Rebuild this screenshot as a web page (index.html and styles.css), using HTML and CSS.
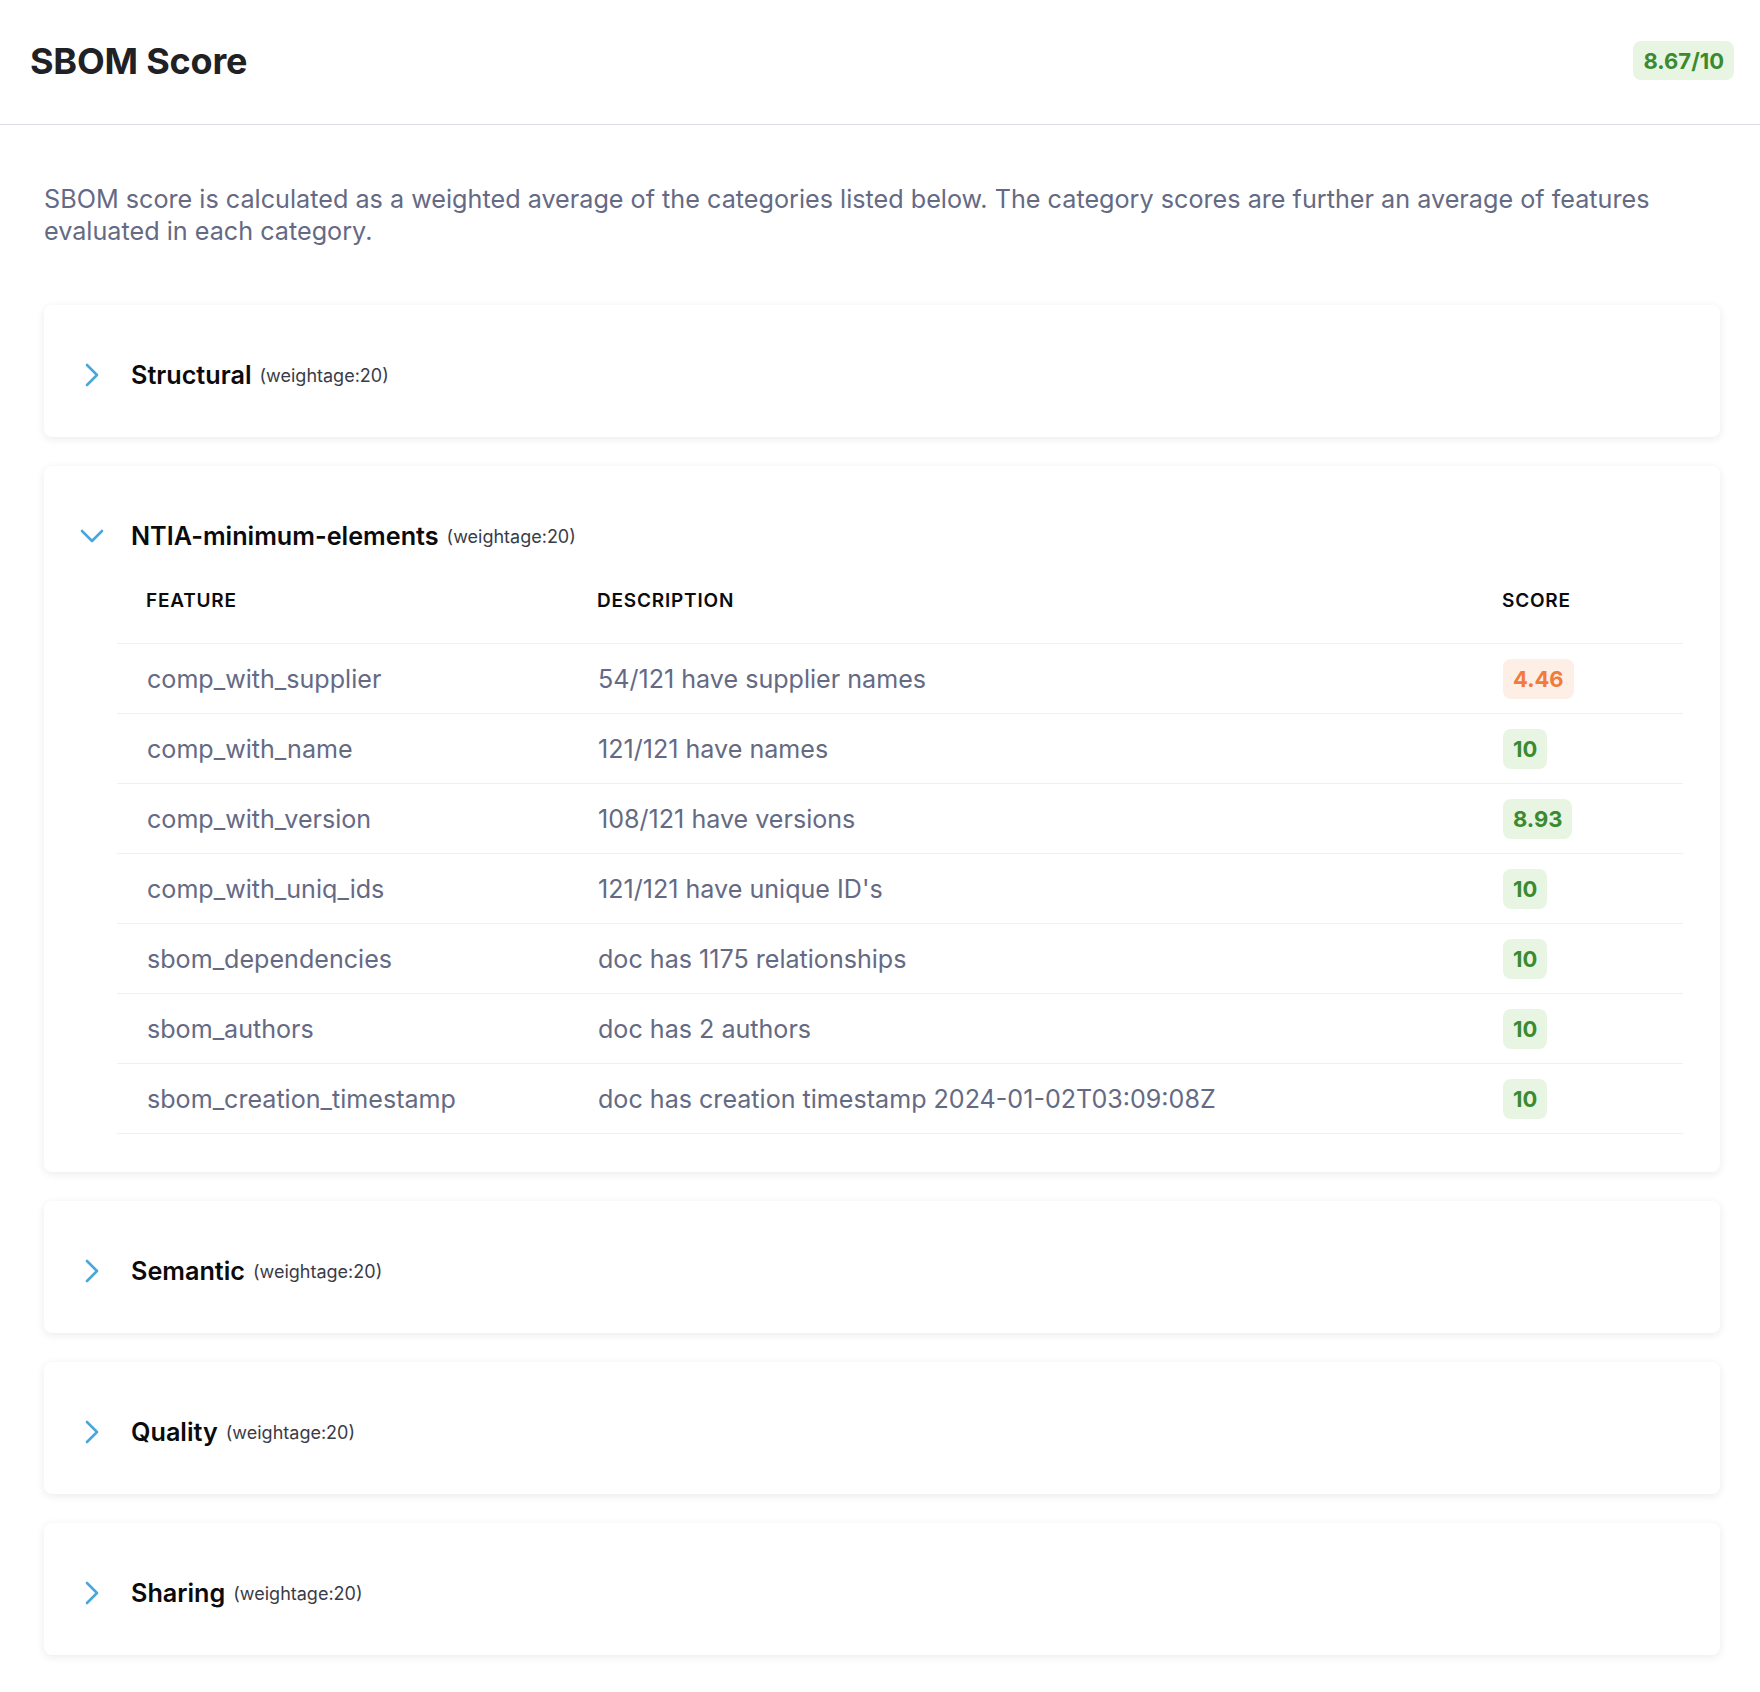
FILE: index.html
```html
<!DOCTYPE html>
<html lang="en">
<head>
<meta charset="utf-8">
<title>SBOM Score</title>
<link rel="stylesheet" href="styles.css">
</head>
<body>
<header class="page-header">
  <h1 class="page-title">SBOM Score</h1>
  <span class="score-badge score-good header-badge">8.67/10</span>
</header>
<main class="content">
  <p class="intro">SBOM score is calculated as a weighted average of the categories listed below. The category scores are further an average of features evaluated in each category.</p>

  <section class="card">
    <div class="card-head">
      <span class="chev"><svg viewBox="0 0 24 24" width="24" height="24"><path d="M7 2 L17 12 L7 22" /></svg></span>
      <span class="cat-name">Structural</span>
      <span class="cat-weight">(weightage:20)</span>
    </div>
  </section>

  <section class="card">
    <div class="card-head">
      <span class="chev"><svg viewBox="0 0 24 24" width="24" height="24"><path d="M2 7 L12 17 L22 7" /></svg></span>
      <span class="cat-name">NTIA-minimum-elements</span>
      <span class="cat-weight">(weightage:20)</span>
    </div>
    <div class="feat-table">
      <div class="feat-row feat-headrow">
        <div class="cell th">FEATURE</div>
        <div class="cell th">DESCRIPTION</div>
        <div class="cell th">SCORE</div>
      </div>
      <div class="feat-row">
        <div class="cell">comp_with_supplier</div>
        <div class="cell">54/121 have supplier names</div>
        <div class="cell"><span class="score-badge score-warn">4.46</span></div>
      </div>
      <div class="feat-row">
        <div class="cell">comp_with_name</div>
        <div class="cell">121/121 have names</div>
        <div class="cell"><span class="score-badge score-good">10</span></div>
      </div>
      <div class="feat-row">
        <div class="cell">comp_with_version</div>
        <div class="cell">108/121 have versions</div>
        <div class="cell"><span class="score-badge score-good">8.93</span></div>
      </div>
      <div class="feat-row">
        <div class="cell">comp_with_uniq_ids</div>
        <div class="cell">121/121 have unique ID's</div>
        <div class="cell"><span class="score-badge score-good">10</span></div>
      </div>
      <div class="feat-row">
        <div class="cell">sbom_dependencies</div>
        <div class="cell">doc has 1175 relationships</div>
        <div class="cell"><span class="score-badge score-good">10</span></div>
      </div>
      <div class="feat-row">
        <div class="cell">sbom_authors</div>
        <div class="cell">doc has 2 authors</div>
        <div class="cell"><span class="score-badge score-good">10</span></div>
      </div>
      <div class="feat-row">
        <div class="cell">sbom_creation_timestamp</div>
        <div class="cell">doc has creation timestamp 2024-01-02T03:09:08Z</div>
        <div class="cell"><span class="score-badge score-good">10</span></div>
      </div>
    </div>
  </section>

  <section class="card">
    <div class="card-head">
      <span class="chev"><svg viewBox="0 0 24 24" width="24" height="24"><path d="M7 2 L17 12 L7 22" /></svg></span>
      <span class="cat-name">Semantic</span>
      <span class="cat-weight">(weightage:20)</span>
    </div>
  </section>

  <section class="card">
    <div class="card-head">
      <span class="chev"><svg viewBox="0 0 24 24" width="24" height="24"><path d="M7 2 L17 12 L7 22" /></svg></span>
      <span class="cat-name">Quality</span>
      <span class="cat-weight">(weightage:20)</span>
    </div>
  </section>

  <section class="card">
    <div class="card-head">
      <span class="chev"><svg viewBox="0 0 24 24" width="24" height="24"><path d="M7 2 L17 12 L7 22" /></svg></span>
      <span class="cat-name">Sharing</span>
      <span class="cat-weight">(weightage:20)</span>
    </div>
  </section>
</main>
</body>
</html>
```

FILE: styles.css
```css
* { box-sizing: border-box; }

body {
  margin: 0;
  background: #ffffff;
  font-family: Inter, "Noto Sans", "Liberation Sans", sans-serif;
  color: #1f2125;
}

.page-header {
  height: 125px;
  padding: 0 26px 3px 30px;
  border-bottom: 1px solid #dcdce3;
  display: flex;
  align-items: center;
  justify-content: space-between;
}

.page-title {
  margin: 0;
  font-size: 36px;
  font-weight: 700;
  color: #1f2125;
  letter-spacing: -0.2px;
}

.score-badge {
  display: inline-flex;
  align-items: center;
  height: 40px;
  padding: 0 10px;
  border-radius: 8px;
  font-size: 22px;
  font-weight: 700;
}

.header-badge {
  height: 39px;
}

.score-good {
  background: #e8f5e3;
  color: #3b8a30;
}

.score-warn {
  background: #fdefe6;
  color: #f07b3c;
}

.content {
  padding: 58px 40px 40px 44px;
}

.intro {
  margin: 0 0 58px;
  font-size: 25.2px;
  line-height: 32px;
  color: #656a84;
}

.card {
  background: #ffffff;
  border-radius: 8px;
  box-shadow: 0 2px 8px rgba(30, 30, 60, 0.09);
  padding: 42px 37px 34px 36px;
  margin-bottom: 29px;
}

.card-head {
  height: 56px;
  display: flex;
  align-items: center;
}

.chev {
  width: 24px;
  height: 24px;
  margin-right: 27px;
  display: flex;
}

.chev svg path {
  fill: none;
  stroke: #47a6dc;
  stroke-width: 2.6;
  stroke-linecap: round;
  stroke-linejoin: round;
}

.cat-name {
  font-size: 25.2px;
  font-weight: 600;
  color: #0b0b0d;
  margin-right: 8px;
}

.cat-weight {
  font-size: 18px;
  color: #3a3b48;
}

.feat-table {
  margin: 0 0 4px 37px;
}

.feat-row {
  display: grid;
  grid-template-columns: 451px 905px 1fr;
  height: 70px;
  align-items: center;
  border-bottom: 1px solid #f0eff8;
  font-size: 25.1px;
  color: #656a84;
}

.feat-headrow {
  height: 80px;
  align-items: start;
  padding-top: 25px;
}

.cell {
  padding-left: 30px;
}

.th {
  padding-left: 29px;
  font-size: 19px;
  font-weight: 600;
  letter-spacing: 0.8px;
  color: #0b0b0d;
  line-height: 24px;
}
```
